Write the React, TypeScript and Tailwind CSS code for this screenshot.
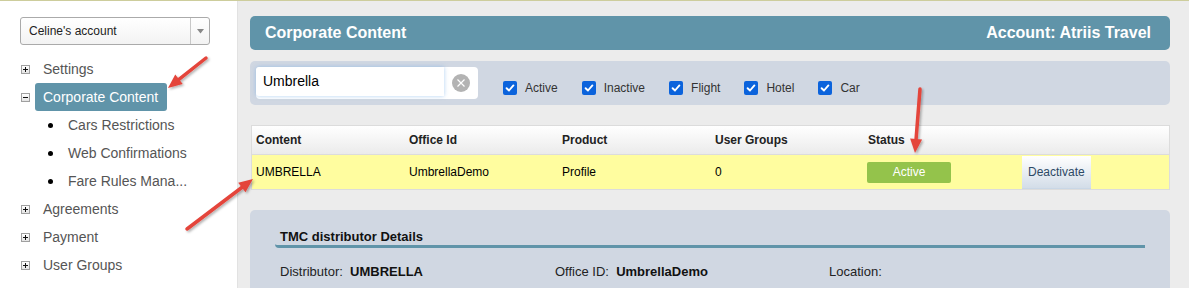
import React from 'react';

const menuTop = [{ label: 'Settings', open: false }];
const subItems = ['Cars Restrictions', 'Web Confirmations', 'Fare Rules Mana...'];
const menuBottom = ['Agreements', 'Payment', 'User Groups'];
const filters = ['Active', 'Inactive', 'Flight', 'Hotel', 'Car'];
const columns = ['Content', 'Office Id', 'Product', 'User Groups', 'Status'];

function ToggleBox({ open }: { open: boolean }) {
  return (
    <span className="ml-px flex h-[9px] w-[9px] shrink-0 items-center justify-center border border-[#a0a0a0] bg-gradient-to-b from-white to-[#e4e4e4]">
      <svg width="7" height="7" viewBox="0 0 7 7">
        <rect x="1" y="3" width="5" height="1" fill="#111" />
        {!open && <rect x="3" y="1" width="1" height="5" fill="#111" />}
      </svg>
    </span>
  );
}

function MenuRow({ label, open, active }: { label: string; open?: boolean; active?: boolean }) {
  return (
    <div className="flex h-[28px] items-center">
      <ToggleBox open={!!open} />
      <span
        className={`ml-[5px] flex h-[28px] items-center rounded-[3px] pl-[8px] pr-[9px] text-[14px] ${
          active ? 'bg-[#6094a9] text-white' : 'text-[#555]'
        }`}
      >
        {label}
      </span>
    </div>
  );
}

function Check({ label }: { label: string }) {
  return (
    <div className="mr-[24px] flex items-center gap-[8px]">
      <span className="flex h-[14px] w-[14px] items-center justify-center rounded-[2px] bg-[#0b63dc]">
        <svg width="10" height="10" viewBox="0 0 10 10">
          <path d="M1.6 5.2 L4 7.5 L8.4 2.4" fill="none" stroke="#fff" strokeWidth="1.9" strokeLinecap="round" strokeLinejoin="round" />
        </svg>
      </span>
      <span className="text-[12px] text-[#333]">{label}</span>
    </div>
  );
}

function Arrow({ x1, y1, x2, y2 }: { x1: number; y1: number; x2: number; y2: number }) {
  const dx = x2 - x1;
  const dy = y2 - y1;
  const len = Math.hypot(dx, dy);
  const ux = dx / len;
  const uy = dy / len;
  const bx = x2 - ux * 14;
  const by = y2 - uy * 14;
  const nx = -uy * 6;
  const ny = ux * 6;
  return (
    <g filter="url(#arrowShadow)">
      <line x1={x1} y1={y1} x2={bx + ux * 2} y2={by + uy * 2} stroke="#e4443b" strokeWidth="3.5" strokeLinecap="round" />
      <polygon points={`${x2},${y2} ${bx + nx},${by + ny} ${bx - nx},${by - ny}`} fill="#e4443b" />
    </g>
  );
}

export default function App() {
  return (
    <div className="relative h-[288px] w-[1189px] overflow-hidden bg-[#ececec] font-['Liberation_Sans',Arial,sans-serif]">
      <div className="h-px bg-[#cdcd9c]" />
      <div className="flex h-[287px]">
        {/* Sidebar */}
        <div className="w-[238px] shrink-0 border-r border-[#e2e2e2] bg-white pl-[20px] pt-[16px]">
          <div className="flex h-[28px] w-[190px] items-center rounded-[3px] border border-[#aaa] bg-gradient-to-b from-white to-[#f3f3f3]">
            <span className="flex-1 pl-[8px] text-[12px] text-[#222]">Celine's account</span>
            <span className="flex h-full w-[19px] items-center justify-center border-l border-[#c8c8c8]">
              <svg width="7" height="5" viewBox="0 0 7 5">
                <path d="M0 0 H7 L3.5 4.5 Z" fill="#888" />
              </svg>
            </span>
          </div>

          <div className="mt-[10px]">
            {menuTop.map(m => (
              <MenuRow key={m.label} label={m.label} />
            ))}
            <MenuRow label="Corporate Content" open active />
            {subItems.map(s => (
              <div key={s} className="flex h-[28px] items-center">
                <span className="ml-[28px] h-[5px] w-[5px] rounded-full bg-black" />
                <span className="ml-[15px] text-[14px] text-[#555]">{s}</span>
              </div>
            ))}
            {menuBottom.map(m => (
              <MenuRow key={m} label={m} />
            ))}
          </div>
        </div>

        {/* Main */}
        <div className="flex-1 pl-[12px] pr-[19px] pt-[15px]">
          <div className="flex h-[34px] items-center justify-between rounded-[5px] bg-[#6094a9] pl-[15px] pr-[19px] text-[16px] font-bold text-white">
            <span>Corporate Content</span>
            <span>Account: Atriis Travel</span>
          </div>

          <div className="mt-[11px] flex h-[44px] rounded-[5px] bg-[#d0d7e2] pl-[6px] pt-[6px]">
            <div className="flex h-[32px] w-[222px] rounded-[4px] bg-white">
              <div className="flex h-[29px] w-[188px] items-center rounded-l-[3px] bg-white pl-[7px] text-[14px] text-black shadow-[0_0_4px_rgba(110,170,230,0.55)]">
                Umbrella
              </div>
              <div className="flex flex-1 items-center justify-center pb-[1px]">
                <span className="flex h-[18px] w-[18px] items-center justify-center rounded-full bg-[#b3b3b3]">
                  <svg width="10" height="10" viewBox="0 0 10 10">
                    <path d="M1.5 1.5 L8.5 8.5 M8.5 1.5 L1.5 8.5" stroke="#fff" strokeWidth="1.2" />
                  </svg>
                </span>
              </div>
            </div>
            <div className="ml-[25px] flex items-start pt-[12px]">
              {filters.map(f => (
                <Check key={f} label={f} />
              ))}
            </div>
          </div>

          <div className="ml-px mt-[20px] border border-[#dcdcdc] bg-white">
            <div className="flex h-[29px] items-center border-b border-[#dcdcdc] bg-gradient-to-b from-white to-[#ebebeb] text-[12px] font-bold text-[#222]">
              {columns.map(c => (
                <div key={c} className="w-[153px] pl-[4px]">
                  {c}
                </div>
              ))}
            </div>
            <div className="flex h-[34px] items-center bg-[#fffd9f] text-[12px] text-black">
              <div className="w-[153px] pl-[4px]">UMBRELLA</div>
              <div className="w-[153px] pl-[4px]">UmbrellaDemo</div>
              <div className="w-[153px] pl-[4px]">Profile</div>
              <div className="w-[153px] pl-[4px]">0</div>
              <div className="w-[153px] pl-[3px]">
                <span className="flex h-[21px] w-[84px] items-center justify-center rounded-[2px] bg-[#94c34b] text-white">
                  Active
                </span>
              </div>
              <div className="h-full pl-[5px] pt-px">
                <span className="flex h-[33px] items-center border-b border-[#c9d7e6] bg-gradient-to-b from-white to-[#d3dde8] px-[6px] text-[#2c4965]">
                  Deactivate
                </span>
              </div>
            </div>
          </div>

          <div className="mt-[20px] h-[100px] rounded-t-[5px] bg-[#d0d7e2] px-[25px] pt-[19px]">
            <div className="rounded-bl-[4px] border-b-[3px] border-[#6094a9] pb-px pl-[5px] text-[13px] font-bold leading-[15px] text-[#111]">
              TMC distributor Details
            </div>
            <div className="mt-[16px] flex pl-[5px] text-[13px] leading-[15px] text-[#222]">
              <div className="w-[275px]">
                Distributor:&nbsp; <span className="font-bold text-[#111]">UMBRELLA</span>
              </div>
              <div className="w-[274px]">
                Office ID:&nbsp; <span className="font-bold text-[#111]">UmbrellaDemo</span>
              </div>
              <div>Location:</div>
            </div>
          </div>
        </div>
      </div>

      {/* annotation arrows */}
      <svg className="pointer-events-none absolute left-0 top-0" width="1189" height="288">
        <defs>
          <filter id="arrowShadow" x="-20%" y="-20%" width="140%" height="140%">
            <feDropShadow dx="1.5" dy="1.5" stdDeviation="1" floodColor="#000" floodOpacity="0.3" />
          </filter>
        </defs>
        <Arrow x1={206} y1={58} x2={168} y2={88} />
        <Arrow x1={187} y1={229} x2={253} y2={179} />
        <Arrow x1={920} y1={89} x2={915} y2={153} />
      </svg>
    </div>
  );
}
